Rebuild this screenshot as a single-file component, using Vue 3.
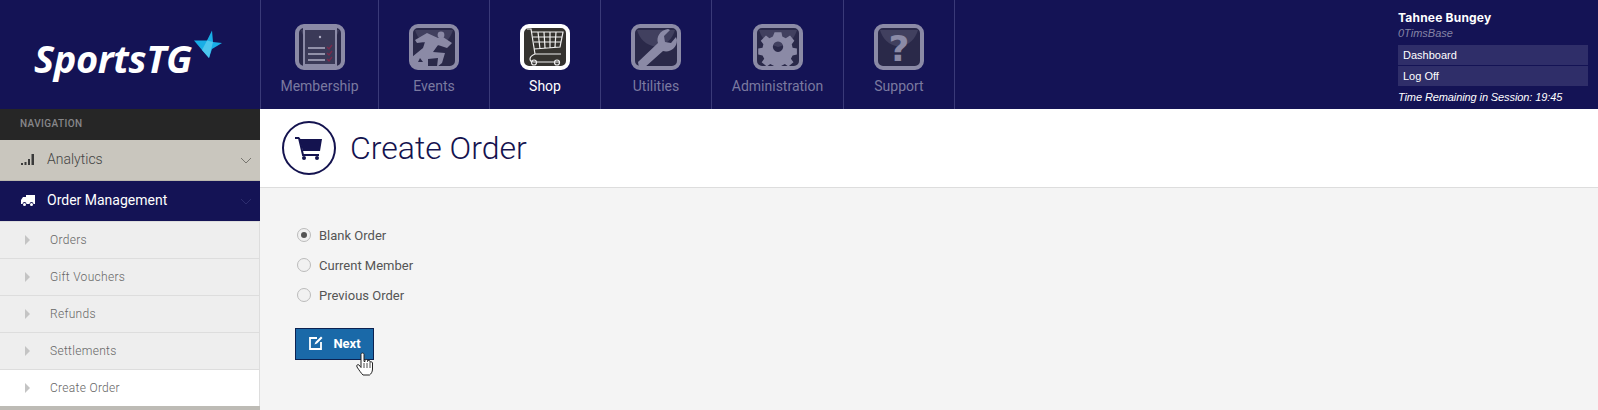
<template>
  <div class="app">
    <header class="topbar">
      <div class="logo">
        <span class="logo-text">SportsTG</span>
        <svg class="logo-star" viewBox="0 0 28 28">
          <polygon points="0,10.500 13,10.500 18,0.500 19,12 28,13 18,19 15,28 8,20" fill="#19aee6" />
          <polygon points="8,20 13,10.500 19,12 15,28" fill="#4cc6ee" />
        </svg>
      </div>

      <nav class="main-nav">
        <a v-for="item in navItems" :key="item.label" class="nav-item" :class="{ active: item.active }" :style="{ width: item.width + 'px' }">
          <svg class="nav-icon" viewBox="0 0 50 46">
            <rect x="2" y="2" width="46" height="42" rx="7" class="icon-frame" />
            <path d="M6 6h38q-4 14-19 17q-15-3-19-17z" class="icon-glow" />
            <template v-if="item.icon === 'member'">
              <rect x="9" y="5" width="32" height="36" class="doc" />
              <circle cx="25" cy="13" r="1.2" class="line-dot" />
              <path d="M13 24h17M13 30h17M13 36h17" class="line" />
              <path d="M32 23l2 2 3-4M32 29l2 2 3-4M32 35l2 2 3-4" class="tick" />
            </template>
            <template v-else-if="item.icon === 'events'">
              <circle cx="32" cy="11" r="3.400" class="shape" />
              <path class="shape" fill-rule="evenodd" d="M6 16L18 9l11 5 5-1 9 6-5 5-9-3-5 7 12 1-3 10-5 4 1-9-10 1 0 7-4 2H4L3 33l11-9 2-6-8 1zM9 38l5 0-3-4z" />
            </template>
            <template v-else-if="item.icon === 'shop'">
              <path class="cart" d="M7 5h4l4 25h26M11 8h32l-3 15-26 2M18 8l2 17M24 8l1 16M30 8l0 16M36 8l-1 15M13 13h29M14 18h27M15 30q-5 2 -5 5t4 3h26" />
              <circle cx="14" cy="38.500" r="2.500" class="cart" />
              <circle cx="37" cy="38.500" r="2.500" class="cart" />
            </template>
            <template v-else-if="item.icon === 'tools'">
              <path class="shape" d="M7 38l20-19c-2-6 2-13 10-14l2 1-6 6 1 6 6 1 5-6 1 3c0 8-7 13-14 11l-19 17-5 0z" />
            </template>
            <template v-else-if="item.icon === 'gear'">
              <path class="shape" fill-rule="evenodd" d="M21 6h8l1 5 4 2 5-3 5 6-3 4 1 4 5 1v7l-5 1-2 4 3 4-6 5-4-3-4 2-1 5h-7l-1-5-4-2-4 3-6-5 3-4-2-4-5-1v-7l5-1 1-4-3-4 6-6 4 3 4-2zM25 17a6 6 0 1 0 0.010 0z" transform="translate(3.500 3) scale(0.860)" />
            </template>
            <template v-else>
              <text x="25" y="37" text-anchor="middle" class="qmark">?</text>
            </template>
          </svg>
          <span>{{ item.label }}</span>
        </a>
      </nav>

      <div class="user-box">
        <div class="user-name">Tahnee Bungey</div>
        <div class="user-org">0TimsBase</div>
        <a class="user-link">Dashboard</a>
        <a class="user-link">Log Off</a>
        <div class="session">Time Remaining in Session: 19:45</div>
      </div>
    </header>

    <div class="body">
      <aside class="sidebar">
        <div class="side-label">NAVIGATION</div>

        <div class="side-group analytics">
          <svg class="group-icon" viewBox="0 0 16 14">
            <path d="M1 11h2v2H1zM4.500 10h2v3h-2zM8 7h2v6H8zM11.500 2h2.500v11h-2.500z" fill="#3a3a3a" />
          </svg>
          <span>Analytics</span>
          <svg class="chev" viewBox="0 0 12 8"><path d="M1 1l5 5 5-5" fill="none" stroke="#77756f" /></svg>
        </div>

        <div class="side-group orders">
          <svg class="group-icon" viewBox="0 0 16 14">
            <path d="M6 2h9v9h-1.500a2 2 0 0 0-4 0H6.500a2 2 0 0 0-4 0H1V7l2-3h3z" fill="#fff" />
            <circle cx="4.500" cy="11.500" r="1.500" fill="#fff" />
            <circle cx="11.500" cy="11.500" r="1.500" fill="#fff" />
          </svg>
          <span>Order Management</span>
          <svg class="chev" viewBox="0 0 12 8"><path d="M1 1l5 5 5-5" fill="none" stroke="#2c2c6e" /></svg>
        </div>

        <a v-for="link in links" :key="link.label" class="side-link" :class="{ current: link.current }">
          <i class="arrow"></i>
          <span>{{ link.label }}</span>
        </a>

        <div class="side-end"></div>
      </aside>

      <main class="content">
        <div class="page-head">
          <div class="head-icon">
            <svg viewBox="0 0 30 26" width="30" height="26">
              <path d="M1 2h4l1 2h22l-2 12H9L5 4H1z" fill="#14134f" />
              <path d="M5 3l4 17h16" fill="none" stroke="#14134f" stroke-width="2" />
              <circle cx="10" cy="23" r="2" fill="#14134f" />
              <circle cx="23" cy="23" r="2" fill="#14134f" />
            </svg>
          </div>
          <h1>Create Order</h1>
        </div>

        <form class="order-form" @submit.prevent>
          <label v-for="opt in options" :key="opt.value" class="radio-row">
            <input v-model="orderType" type="radio" name="order" :value="opt.value" />
            <span class="radio-mark"></span>
            <span>{{ opt.label }}</span>
          </label>

          <div class="btn-wrap">
            <button class="next-btn" type="submit">
              <svg viewBox="0 0 16 16" width="16" height="16">
                <path d="M9 3H2v11h11V7" fill="none" stroke="#fff" stroke-width="1.800" />
                <path d="M6.500 9.500l1 -2.500L13 1.500l1.500 1.500L9 8.500z" fill="#fff" />
              </svg>
              Next
            </button>
            <svg class="cursor" viewBox="0 0 18 24" width="18" height="24">
              <path d="M5 2.500c0-2 3-2 3 0v7l1 0v-1c0-1.500 2.500-1.500 2.500 0v1c0-1.500 2.500-1.500 2.500 0v1c0-1 2.500-1 2.500 .5v6c0 3-1.500 5-3 6H7c-2-2-4-5-6-8-1-2 1-3 2-2l2 2.500z" fill="#fff" stroke="#222" stroke-width="1" />
              <path d="M8 11v5M11 11v5M14 11v5" stroke="#222" stroke-width=".8" />
            </svg>
          </div>
        </form>
      </main>
    </div>
  </div>
</template>

<script setup>
import { ref } from 'vue'

const navItems = [
  { label: 'Membership', icon: 'member', width: 118 },
  { label: 'Events', icon: 'events', width: 111 },
  { label: 'Shop', icon: 'shop', width: 111, active: true },
  { label: 'Utilities', icon: 'tools', width: 111 },
  { label: 'Administration', icon: 'gear', width: 132 },
  { label: 'Support', icon: 'help', width: 111 }
]

const links = [
  { label: 'Orders' },
  { label: 'Gift Vouchers' },
  { label: 'Refunds' },
  { label: 'Settlements' },
  { label: 'Create Order', current: true }
]

const options = [
  { value: 'blank', label: 'Blank Order' },
  { value: 'member', label: 'Current Member' },
  { value: 'previous', label: 'Previous Order' }
]

const orderType = ref('blank')
</script>

<style>
body {
  background: #f4f4f4;
}
</style>

<style scoped>
.app {
  height: 410px;
  overflow: hidden;
  display: flex;
  flex-direction: column;
  font-family: Roboto, "Liberation Sans", sans-serif;
}

.topbar {
  height: 109px;
  flex: none;
  display: flex;
  background: #141355;
}

.logo {
  width: 260px;
  flex: none;
  display: flex;
  align-items: flex-start;
  padding: 35px 0 0 34px;
  box-sizing: border-box;
}

.logo-text {
  font-family: "Open Sans", sans-serif;
  font-style: italic;
  font-weight: 700;
  font-size: 38px;
  line-height: 46px;
  letter-spacing: -0.4px;
  color: #fff;
}

.logo-star {
  width: 28px;
  height: 28px;
  margin: -5px 0 0 2px;
}

.main-nav {
  display: flex;
  border-left: 1px solid #3a3a78;
}

.nav-item {
  display: flex;
  flex-direction: column;
  align-items: center;
  box-sizing: border-box;
  padding-top: 24px;
  border-right: 1px solid #3a3a78;
  color: #7b7aa0;
  font-size: 14px;
}

.nav-item.active {
  color: #fff;
}

.nav-icon {
  width: 50px;
  height: 46px;
  margin-bottom: 8px;
}

.icon-frame {
  fill: #2a2949;
  stroke: #8b8aa6;
  stroke-width: 4;
}

.icon-glow {
  fill: #41405f;
}

.doc {
  fill: #3b3a58;
  stroke: #8b8aa6;
  stroke-width: 2;
}

.shape {
  fill: #8b8aa6;
}

.line-dot {
  fill: #b0afc4;
}

.line {
  stroke: #b0afc4;
  stroke-width: 1.500;
  fill: none;
}

.tick {
  stroke: #7a2a4c;
  stroke-width: 1.300;
  fill: none;
}

.qmark {
  fill: #8b8aa6;
  font-family: "DejaVu Sans", sans-serif;
  font-weight: 700;
  font-size: 36px;
}

.active .icon-frame {
  fill: #35332f;
  stroke: #fff;
}

.active .icon-glow {
  fill: #35332f;
}

.cart {
  fill: none;
  stroke: #efefef;
  stroke-width: 1.200;
}

.user-box {
  margin-left: auto;
  width: 190px;
  margin-right: 10px;
  padding-top: 10px;
  font-family: "Liberation Sans", Arial, sans-serif;
  font-size: 11px;
  color: #fff;
}

.user-name {
  font-family: Inter, Roboto, sans-serif;
  font-weight: 700;
  font-size: 12px;
  line-height: 16px;
  letter-spacing: 0.2px;
}

.user-org {
  font-style: italic;
  line-height: 15px;
  margin-bottom: 4px;
  color: #8584a6;
}

.user-link {
  display: block;
  height: 20px;
  line-height: 20px;
  padding-left: 5px;
  margin-bottom: 1px;
  background: #2f2e69;
}

.session {
  font-style: italic;
  line-height: 20px;
  letter-spacing: -0.1px;
}

.body {
  flex: 1;
  min-height: 0;
  display: flex;
}

.sidebar {
  width: 260px;
  flex: none;
  display: flex;
  flex-direction: column;
}

.side-label {
  height: 31px;
  line-height: 29px;
  padding-left: 20px;
  background: #262626;
  color: #87878a;
  font-size: 10px;
  font-weight: 500;
  letter-spacing: 0.4px;
}

.side-group {
  height: 40px;
  box-sizing: border-box;
  display: flex;
  align-items: center;
  font-size: 14px;
  padding: 0 8px 2px 20px;
}

.side-group span {
  flex: 1;
}

.analytics {
  height: 41px;
  background: #c9c6be;
  color: #444;
  font-weight: 300;
  border-bottom: 1px solid #b9b6ae;
}

.orders {
  background: #141355;
  color: #fff;
}

.group-icon {
  width: 16px;
  height: 14px;
  margin-right: 11px;
}

.chev {
  width: 12px;
  height: 8px;
  margin-top: 3px;
}

.side-link {
  height: 37px;
  box-sizing: border-box;
  display: flex;
  align-items: center;
  padding-left: 25px;
  background: #eee;
  border-top: 1px solid #ddd;
  border-right: 1px solid #ddd;
  color: #666;
  font-size: 12px;
  font-weight: 300;
  letter-spacing: 0.3px;
}

.side-link.current {
  background: #fff;
}

.arrow {
  width: 0;
  height: 0;
  border-left: 5px solid #c4c4c4;
  border-top: 5px solid transparent;
  border-bottom: 5px solid transparent;
  margin-right: 20px;
}

.side-end {
  height: 4px;
  background: #bdbbb5;
}

.content {
  flex: 1;
  min-width: 0;
  background: #f4f4f4;
}

.page-head {
  height: 79px;
  box-sizing: border-box;
  display: flex;
  align-items: center;
  padding-left: 22px;
  gap: 14px;
  background: #fff;
  border-bottom: 1px solid #ddd;
}

.head-icon {
  width: 54px;
  height: 54px;
  box-sizing: border-box;
  border: 2px solid #14134f;
  border-radius: 50%;
  display: flex;
  align-items: center;
  justify-content: center;
}

h1 {
  margin: 0;
  font-size: 32px;
  font-weight: 300;
  color: #14134f;
}

.order-form {
  display: flex;
  flex-direction: column;
  align-items: flex-start;
  padding: 32px 0 0 35px;
}

.radio-row {
  height: 30px;
  display: flex;
  align-items: center;
  gap: 8px;
  padding-left: 2px;
  font-size: 13px;
  color: #555;
}

.radio-row input {
  display: none;
}

.radio-mark {
  width: 14px;
  height: 14px;
  box-sizing: border-box;
  border: 1px solid #bbb;
  border-radius: 50%;
  background: #f1f1f1;
  display: flex;
  align-items: center;
  justify-content: center;
}

input:checked + .radio-mark::after {
  content: "";
  width: 6px;
  height: 6px;
  border-radius: 50%;
  background: #555;
}

.btn-wrap {
  position: relative;
  margin-top: 18px;
}

.next-btn {
  width: 79px;
  height: 32px;
  box-sizing: border-box;
  display: flex;
  align-items: center;
  justify-content: center;
  gap: 9px;
  padding: 0 0 2px;
  background: #1a69a8;
  border: 1px solid #0c2150;
  color: #fff;
  font-family: Roboto, sans-serif;
  font-size: 13px;
  font-weight: 700;
}

.cursor {
  position: absolute;
  left: 61px;
  top: 24px;
}
</style>
